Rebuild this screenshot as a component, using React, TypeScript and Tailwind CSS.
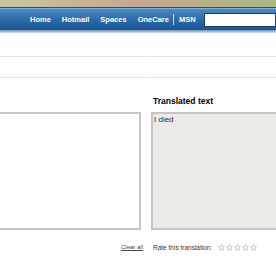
const links = ["Home", "Hotmail", "Spaces", "OneCare"];

const Star = () => (
  <svg width="7" height="7" viewBox="0 0 10 10" className="shrink-0">
    <path
      d="M5 0.6 L6.3 3.6 L9.5 3.8 L7 5.9 L7.8 9.2 L5 7.4 L2.2 9.2 L3 5.9 L0.5 3.8 L3.7 3.6 Z"
      fill="none"
      stroke="#b8b8b8"
      strokeWidth="1"
    />
  </svg>
);

export default function App() {
  return (
    <div className="w-[276px] h-[260px] overflow-hidden bg-white font-['Liberation_Sans',Arial,sans-serif]">
      {/* header */}
      <div className="h-[7px] bg-gradient-to-r from-[#c9c6a0] via-[#c4a894] to-[#a9b981]" />
      <div className="h-px bg-[#2a4f73]" />
      <div className="h-[22px] flex items-center bg-gradient-to-b from-[#4e8cc6] via-[#2c6aa9] to-[#1d5592] border-t border-[#7fb0dc]">
        <nav className="flex items-center pl-[30px] gap-[11px] text-[7.5px] font-bold text-white">
          {links.map((l) => (
            <span key={l}>{l}</span>
          ))}
        </nav>
        <span className="ml-[4px] w-px h-[11px] bg-white/80" />
        <span className="ml-[5px] text-[7.5px] font-bold text-white">MSN</span>
        <div className="ml-[8px] flex-1 h-[14px] bg-white border border-[#1b3e63]" />
      </div>
      <div className="h-[3px] bg-gradient-to-b from-[#6f93b6] to-[#d7e2ec]" />

      {/* divider lines */}
      <div className="mt-[23px] flex gap-px">
        <div className="w-[148px] h-px bg-[#e4e4e4]" />
        <div className="flex-1 h-px bg-[#e4e4e4]" />
      </div>
      <div className="mt-[20px] flex gap-px">
        <div className="w-[148px] h-px bg-[#e4e4e4]" />
        <div className="flex-1 h-px bg-[#e4e4e4]" />
      </div>

      {/* translation panes */}
      <div className="mt-[18px] pl-[153px] text-[8.5px] font-bold text-black leading-[10px]">
        Translated text
      </div>
      <div className="mt-[6px] flex gap-[10px]">
        <div className="w-[141px] h-[118px] bg-white border-2 border-l-0 border-[#c6c6ca]" />
        <div className="flex-1 h-[118px] bg-[#ebeae4] border-2 border-r-0 border-[#c6c6ca] px-px pt-px text-[8px] leading-[10px] text-[#3a2456]">
          I died
        </div>
      </div>

      {/* footer */}
      <div className="mt-[13px] flex items-center text-[6.5px] text-[#333]">
        <span className="ml-[121px] w-[32px] text-[6px]">
          <span className="underline text-[#444]">Clear all</span>
        </span>
        <span className="w-[65px]">Rate this translation:</span>
        <span className="flex gap-px">
          <Star />
          <Star />
          <Star />
          <Star />
          <Star />
        </span>
      </div>
    </div>
  );
}
